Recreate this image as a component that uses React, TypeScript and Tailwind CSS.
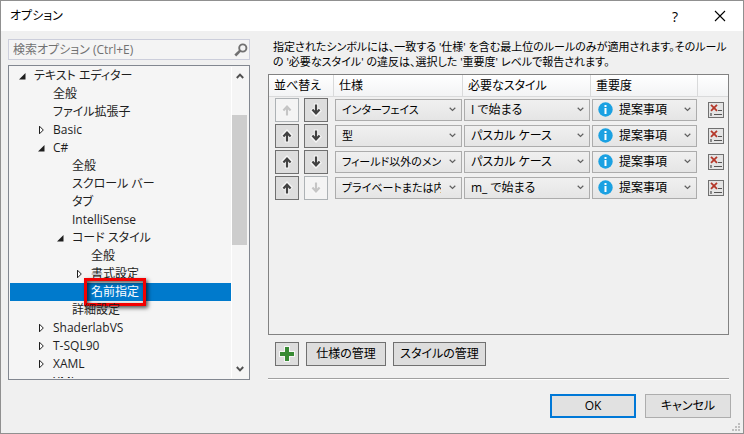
import { useState, type ReactNode } from "react";

type Branch = "open" | "closed" | "none";
type TreeItem = { label: string; level: number; branch: Branch; marked?: boolean };

const treeItems: TreeItem[] = [
  { label: "テキスト エディター", level: 0, branch: "open" },
  { label: "全般", level: 1, branch: "none" },
  { label: "ファイル拡張子", level: 1, branch: "none" },
  { label: "Basic", level: 1, branch: "closed" },
  { label: "C#", level: 1, branch: "open" },
  { label: "全般", level: 2, branch: "none" },
  { label: "スクロール バー", level: 2, branch: "none" },
  { label: "タブ", level: 2, branch: "none" },
  { label: "IntelliSense", level: 2, branch: "none" },
  { label: "コード スタイル", level: 2, branch: "open" },
  { label: "全般", level: 3, branch: "none" },
  { label: "書式設定", level: 3, branch: "closed" },
  { label: "名前指定", level: 3, branch: "none", marked: true },
  { label: "詳細設定", level: 2, branch: "none" },
  { label: "ShaderlabVS", level: 1, branch: "closed" },
  { label: "T-SQL90", level: 1, branch: "closed" },
  { label: "XAML", level: 1, branch: "closed" },
  { label: "XML", level: 1, branch: "none" },
];

const indents = ["pl-[9px]", "pl-[28px]", "pl-[47px]", "pl-[66px]"];

const rules = [
  { spec: "インターフェイス", style: "I で始まる" },
  { spec: "型", style: "パスカル ケース" },
  { spec: "フィールド以外のメンバー", style: "パスカル ケース" },
  { spec: "プライベートまたは内部フィールド", style: "m_ で始まる" },
];

function BranchMark({ branch }: { branch: Branch }) {
  return (
    <svg className="w-[15px] h-3 shrink-0" viewBox="0 0 15 12" aria-hidden="true">
      {branch === "open" && <path d="M6.5 3v6.5H0z" fill="#1e1e1e" />}
      {branch === "closed" && (
        <path d="M1.5 2.2v7.6L5.3 6z" fill="#fff" stroke="#1e1e1e" strokeWidth="1" />
      )}
    </svg>
  );
}

function Chevron() {
  return (
    <svg
      className="pointer-events-none absolute right-[6px] top-2 h-[5px] w-[7px]"
      viewBox="0 0 7 5"
      aria-hidden="true"
    >
      <path d="M.7.8 3.5 3.4 6.3.8" fill="none" stroke="#606060" strokeWidth="1.2" />
    </svg>
  );
}

function Choice({
  label,
  value,
  icon,
  small,
}: {
  label: string;
  value: string;
  icon?: ReactNode;
  small?: boolean;
}) {
  return (
    <div className="relative h-[22px]">
      {icon}
      <select
        aria-label={label}
        defaultValue={value}
        className={
          "block h-[22px] w-full appearance-none overflow-hidden border border-[#acacac] bg-linear-to-b from-[#f0f0f0] to-[#e5e5e5] pr-5 leading-5 text-black " +
          (icon ? "pl-[26px]" : "pl-[6px]") +
          (small ? " text-[11px]" : "")
        }
      >
        <option>{value}</option>
      </select>
      <Chevron />
    </div>
  );
}

function InfoIcon() {
  return (
    <svg
      className="pointer-events-none absolute left-[6px] top-[3px] h-[15px] w-[15px]"
      viewBox="0 0 15 15"
      aria-hidden="true"
    >
      <circle cx="7.5" cy="7.5" r="7.2" fill="#1ba1e2" />
      <path d="M6.5 3h2v2h-2zM6.5 6h2v6h-2z" fill="#fff" />
    </svg>
  );
}

function MoveButton({ dir, disabled }: { dir: "up" | "down"; disabled: boolean }) {
  return (
    <button
      type="button"
      disabled={disabled}
      aria-label={dir === "up" ? "上へ移動" : "下へ移動"}
      className={
        "flex h-6 w-6 items-center justify-center border " +
        (disabled
          ? "border-[#adb2b5] bg-[#f4f4f4] text-[#c5c5c5]"
          : "border-[#707070] bg-[#dddddd] text-[#424242]")
      }
    >
      <svg className="h-4 w-4" viewBox="0 0 16 16" aria-hidden="true">
        <g transform={dir === "up" ? undefined : "rotate(180 8 8)"} fill="none">
          <path d="M8 14.5V4M3.6 8.8 8 4.2l4.4 4.6" stroke="#f6f6f6" strokeWidth="4.4" />
          <path d="M8 13.5V4M4.4 8.6 8 4.6l3.6 4" stroke="currentColor" strokeWidth="2.2" />
        </g>
      </svg>
    </button>
  );
}

function DeleteButton() {
  return (
    <button
      type="button"
      aria-label="削除"
      className="block h-4 w-4 border border-[#707070] bg-[#e4e4e4]"
    >
      <svg className="h-[14px] w-[14px]" viewBox="0 0 14 14" aria-hidden="true">
        <path d="M2 1.8l6 6M8 1.8l-6 6" stroke="#b5382a" strokeWidth="1.8" />
        <path d="M9 7.5h4M5 11.5h8" stroke="#555" strokeWidth="1" />
        <path d="M1 10h2v3H1z" fill="#8a8a8a" />
      </svg>
    </button>
  );
}

const th =
  "h-[22px] border-r border-b border-[#d9dadb] px-[5px] text-left font-normal leading-[21px]";

export default function App() {
  const [selected, setSelected] = useState(12);
  return (
    <div className="flex h-screen flex-col border border-[#909090] bg-[#f0f0f0] font-['Open_Sans','Noto_Sans_CJK_JP',sans-serif] text-[12px] text-black [font-feature-settings:'palt']">
      <header className="flex h-[30px] shrink-0 items-center bg-white pl-[9px] pr-[17px]">
        <h1 className="flex-1">オプション</h1>
        <button type="button" aria-label="ヘルプ" className="mr-[33px] w-3 text-center text-[14px]">
          ?
        </button>
        <button type="button" aria-label="閉じる" className="block">
          <svg className="h-3 w-3" viewBox="0 0 12 12" aria-hidden="true">
            <path d="M1 1l10 10M11 1 1 11" stroke="#000" strokeWidth="1.1" />
          </svg>
        </button>
      </header>

      <main className="flex min-h-0 flex-1 gap-[18px] pl-[7px] pr-[14px] pt-2">
        <div className="flex w-[242px] shrink-0 flex-col gap-[5px]">
          <div className="flex h-[21px] shrink-0 items-center border border-[#cccedb] bg-[#f4f4f4] pl-1 pr-px">
            <input
              type="text"
              aria-label="検索オプション"
              placeholder="検索オプション (Ctrl+E)"
              className="min-w-0 flex-1 bg-transparent leading-[18px] outline-none placeholder:text-[#717171]"
            />
            <button type="button" aria-label="検索">
              <svg className="h-[14px] w-[14px]" viewBox="0 0 14 14" aria-hidden="true">
                <circle cx="8.8" cy="5" r="3.6" fill="none" stroke="#717171" strokeWidth="1.9" />
                <path d="M6.2 7.6 1.3 12.5" stroke="#717171" strokeWidth="2.6" />
              </svg>
            </button>
          </div>

          <div className="flex min-h-0 flex-1 border border-[#828790] bg-[#f5f5f5] p-px">
            <ul role="tree" aria-label="オプションの分類" className="flex-1 overflow-hidden">
              {treeItems.map((item, i) => (
                <li
                  key={i}
                  role="treeitem"
                  aria-selected={i === selected}
                  onClick={() => setSelected(i)}
                  className={
                    "flex h-[18px] items-center whitespace-nowrap leading-[18px] " +
                    indents[item.level] +
                    (i === selected ? " bg-[#007acc] text-white" : " text-[#1e1e1e]")
                  }
                >
                  <BranchMark branch={item.branch} />
                  <span className="relative">
                    {item.label}
                    {item.marked && (
                      <span className="pointer-events-none absolute -inset-x-[7px] -inset-y-[5px] border-3 border-[#f40000] shadow-[2px_2px_4px_rgba(0,0,0,0.65),inset_2px_2px_4px_rgba(0,0,0,0.65)]" />
                    )}
                  </span>
                </li>
              ))}
            </ul>
            <div className="flex w-[17px] flex-col items-center border-l border-white bg-[#f5f5f5] pr-px">
              <button type="button" aria-label="上へスクロール" className="flex h-[18px] w-full items-center justify-center">
                <svg className="h-[6px] w-2" viewBox="0 0 8 6" aria-hidden="true">
                  <path d="M.8 5 4 1.6 7.2 5" fill="none" stroke="#505050" strokeWidth="1.9" />
                </svg>
              </button>
              <div className="flex w-full flex-1 flex-col">
                <div className="h-[11%]" />
                <div className="h-[47%] bg-[#cdcdcd]" />
              </div>
              <button type="button" aria-label="下へスクロール" className="flex h-[18px] w-full items-center justify-center">
                <svg className="h-[6px] w-2" viewBox="0 0 8 6" aria-hidden="true">
                  <path d="M.8 1 4 4.4 7.2 1" fill="none" stroke="#505050" strokeWidth="1.9" />
                </svg>
              </button>
            </div>
          </div>
        </div>

        <section className="flex min-w-0 flex-1 flex-col">
          <p className="mb-[5px] whitespace-nowrap pl-[5px] text-[11px] leading-[15px]">
            指定されたシンボルには、一致する '仕様' を含む最上位のルールのみが適用されます。そのルール
            <br />
            の '必要なスタイル' の違反は、選択した '重要度' レベルで報告されます。
          </p>

          <div className="min-h-0 flex-1 border border-[#828282]">
            <table className="w-full table-fixed border-separate border-spacing-0">
              <colgroup>
                <col className="w-[65px]" />
                <col className="w-[129px]" />
                <col />
                <col className="w-[107px]" />
                <col className="w-[30px]" />
              </colgroup>
              <thead className="bg-linear-to-b from-white to-[#f2f3f4]">
                <tr>
                  <th className={th}>並べ替え</th>
                  <th className={th}>仕様</th>
                  <th className={th}>必要なスタイル</th>
                  <th className={th}>重要度</th>
                  <th className="border-b border-[#d9dadb]" aria-label="削除" />
                </tr>
              </thead>
              <tbody>
                {rules.map((rule, i) => (
                  <tr key={rule.spec} className="h-[26px]">
                    <td>
                      <div className="flex gap-[5px] pl-[6px]">
                        <MoveButton dir="up" disabled={i === 0} />
                        <MoveButton dir="down" disabled={i === rules.length - 1} />
                      </div>
                    </td>
                    <td className="px-px">
                      <Choice label="仕様" value={rule.spec} small />
                    </td>
                    <td className="px-px">
                      <Choice label="必要なスタイル" value={rule.style} />
                    </td>
                    <td className="px-px">
                      <Choice label="重要度" value="提案事項" icon={<InfoIcon />} />
                    </td>
                    <td className="pl-[10px]">
                      <DeleteButton />
                    </td>
                  </tr>
                ))}
              </tbody>
            </table>
          </div>

          <div className="flex gap-[7px] pl-[7px] pt-[7px]">
            <button
              type="button"
              aria-label="追加"
              className="flex h-6 w-6 items-center justify-center border border-[#707070] bg-[#dddddd]"
            >
              <svg className="h-4 w-4" viewBox="0 0 16 16" aria-hidden="true">
                <path d="M5 0h6v5h5v6h-5v5H5v-5H0V5h5z" fill="#f6f6f6" />
                <path d="M6 1h4v5h5v4h-5v5H6v-5H1V6h5z" fill="#388a34" />
              </svg>
            </button>
            <button type="button" className="h-6 w-20 border border-[#707070] bg-[#dddddd] leading-[22px]">
              仕様の管理
            </button>
            <button type="button" className="h-6 w-[93px] border border-[#707070] bg-[#dddddd] leading-[22px]">
              スタイルの管理
            </button>
          </div>
          <hr className="mt-3 h-[2px] border-t border-b border-t-[#a0a0a0] border-b-white" />
        </section>
      </main>

      <footer className="relative flex shrink-0 justify-end gap-[9px] pb-[15px] pr-3 pt-[14px]">
        <button type="button" className="h-6 w-[86px] border-2 border-[#0078d7] bg-[#e1e1e1] leading-5">
          OK
        </button>
        <button type="button" className="h-6 w-[86px] border border-[#adadad] bg-[#e1e1e1] leading-[22px]">
          キャンセル
        </button>
        <svg className="absolute bottom-[2px] right-[3px] h-2 w-2" viewBox="0 0 8 8" aria-hidden="true">
          <path
            d="M6 0h2v2H6zM3 3h2v2H3zM6 3h2v2H6zM0 6h2v2H0zM3 6h2v2H3zM6 6h2v2H6z"
            fill="#bfbfbf"
          />
        </svg>
      </footer>
    </div>
  );
}
